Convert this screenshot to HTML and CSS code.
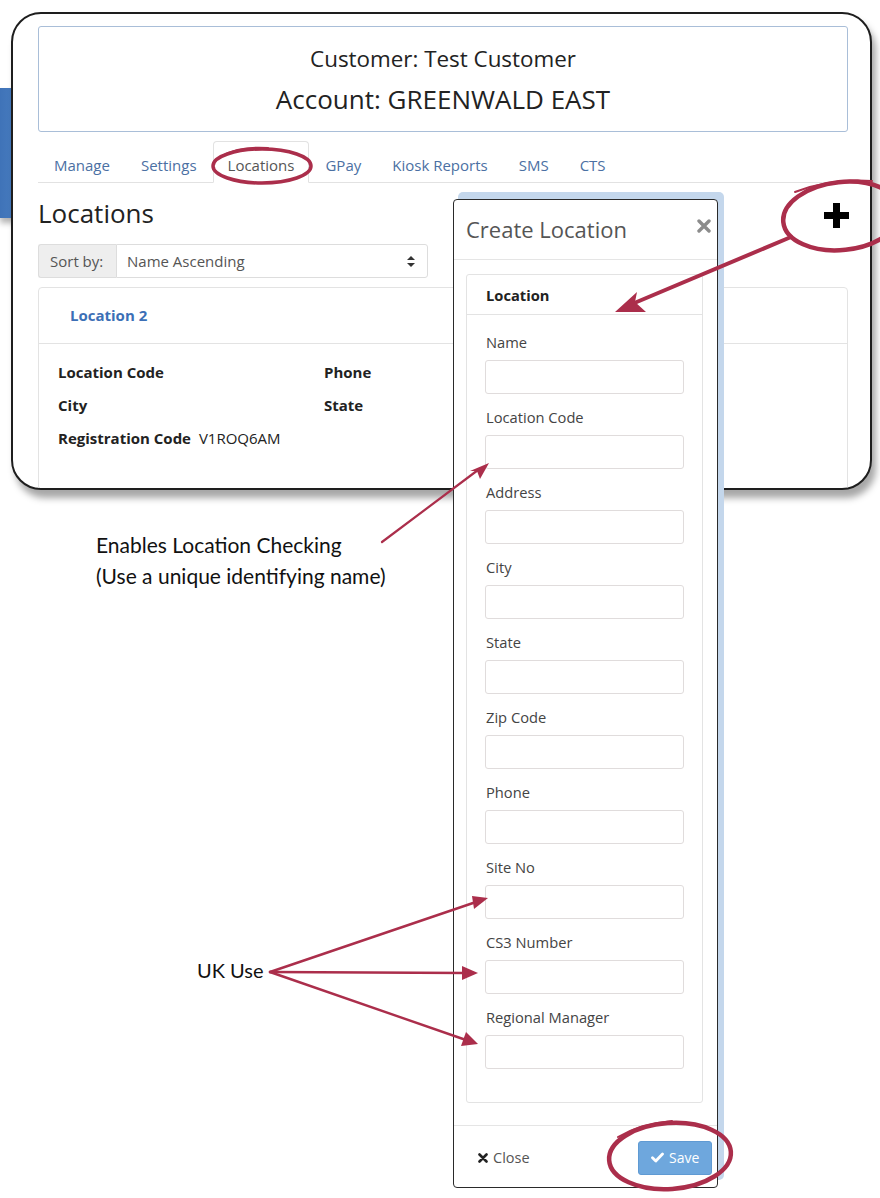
FILE: index.html
```html
<!DOCTYPE html>
<html lang="en">
  <head>
    <meta charset="UTF-8" />
    <title>Create Location</title>
    <link rel="stylesheet" href="styles.css">
  </head>
  <body>
    <div class="page">
      <div class="side-tab"></div>

      <div class="card">
        <div class="account-box">
          <div class="customer">Customer: Test Customer</div>
          <div class="account">Account: GREENWALD EAST</div>
        </div>

        <ul class="tabs">
          <li><a href="#">Manage</a></li>
          <li><a href="#">Settings</a></li>
          <li class="active"><a href="#">Locations</a></li>
          <li><a href="#">GPay</a></li>
          <li><a href="#">Kiosk Reports</a></li>
          <li><a href="#">SMS</a></li>
          <li><a href="#">CTS</a></li>
        </ul>

        <h2 class="page-title">Locations</h2>

        <div class="sort-group">
          <span class="sort-label">Sort by:</span>
          <div class="sort-select">
            <span>Name Ascending</span>
            <svg width="8" height="11" viewBox="0 0 8 11"><path d="M4 0 L8 4 L0 4 Z M4 11 L8 7 L0 7 Z" fill="#333"/></svg>
          </div>
        </div>

        <div class="loc-panel">
          <div class="loc-head">Location 2</div>
          <div class="loc-body">
            <div class="loc-cell"><b>Location Code</b></div>
            <div class="loc-cell"><b>Phone</b></div>
            <div class="loc-cell"><b>City</b></div>
            <div class="loc-cell"><b>State</b></div>
            <div class="loc-cell wide"><b>Registration Code</b> V1ROQ6AM</div>
          </div>
        </div>
      </div>

      <div class="modal-glow"></div>
      <div class="modal">
        <div class="modal-header">
          <span class="modal-title">Create Location</span>
          <svg class="modal-x" width="14" height="14" viewBox="0 0 14 14"><path d="M2 2 L12 12 M12 2 L2 12" stroke="#8c8c8c" stroke-width="3.4" stroke-linecap="round"/></svg>
        </div>
        <div class="modal-body">
          <div class="form-panel">
            <div class="form-head">Location</div>
            <div class="form-body">
              <div class="field"><label>Name</label><input type="text" /></div>
              <div class="field"><label>Location Code</label><input type="text" /></div>
              <div class="field"><label>Address</label><input type="text" /></div>
              <div class="field"><label>City</label><input type="text" /></div>
              <div class="field"><label>State</label><input type="text" /></div>
              <div class="field"><label>Zip Code</label><input type="text" /></div>
              <div class="field"><label>Phone</label><input type="text" /></div>
              <div class="field"><label>Site No</label><input type="text" /></div>
              <div class="field"><label>CS3 Number</label><input type="text" /></div>
              <div class="field"><label>Regional Manager</label><input type="text" /></div>
            </div>
          </div>
        </div>
        <div class="modal-footer">
          <a href="#" class="close-link">
            <svg width="10" height="10" viewBox="0 0 10 10"><path d="M1.5 1.5 L8.5 8.5 M8.5 1.5 L1.5 8.5" stroke="#222" stroke-width="2.6" stroke-linecap="round"/></svg>
            Close
          </a>
          <button type="button" class="save-btn">
            <svg width="13" height="11" viewBox="0 0 13 11"><path d="M1.5 5.8 L4.8 9 L11.5 2" fill="none" stroke="#fff" stroke-width="2.8" stroke-linecap="round" stroke-linejoin="round"/></svg>
            Save
          </button>
        </div>
      </div>

      <svg class="marks" width="880" height="1198" viewBox="0 0 880 1198">
        <!-- plus button -->
        <path d="M833 203 H840 V212 H849 V219 H840 V228 H833 V219 H824 V212 H833 Z" fill="#000"/>

        <g fill="none" stroke="#ab2e4b" stroke-linecap="round">
          <!-- rings -->
          <ellipse cx="262" cy="166" rx="49" ry="17" stroke-width="3.5"/>
          <path d="M222 156 Q240 146 268 148" stroke-width="2"/>
          <ellipse cx="842" cy="216" rx="59" ry="34" transform="rotate(-6 842 216)" stroke-width="4.5"/>
          <path d="M795 192 Q830 178 872 181" stroke-width="2"/>
          <ellipse cx="670" cy="1156" rx="61" ry="33" transform="rotate(-4 670 1156)" stroke-width="4.5"/>
          <path d="M618 1137 Q640 1124 672 1121" stroke-width="2"/>

          <!-- arrows -->
          <line x1="791" y1="237" x2="632" y2="304" stroke-width="4"/>
          <line x1="382" y1="542" x2="478" y2="470" stroke-width="2.2"/>
          <line x1="270" y1="972" x2="476" y2="902" stroke-width="2.4"/>
          <line x1="270" y1="972" x2="466" y2="973" stroke-width="2.4"/>
          <line x1="270" y1="972" x2="466" y2="1040" stroke-width="2.4"/>
        </g>
        <g fill="#ab2e4b">
          <polygon points="615,312 637,292 635,302 646,312"/>
          <polygon points="489,463 480,479 477,471 470,471"/>
          <polygon points="488,898 474,909 472,896"/>
          <polygon points="478,973 462,980 462,966"/>
          <polygon points="478,1044 461,1046 466,1032"/>
        </g>
      </svg>

      <div class="note note-code">Enables Location Checking<br>(Use a unique identifying name)</div>
      <div class="note note-uk">UK Use</div>
    </div>
  </body>
</html>
```

FILE: styles.css
```css
body {
  margin: 0;
  background-color: white;
  font-family: "Open Sans", "Noto Sans", sans-serif;
  color: #333;
}

.page {
  position: relative;
  width: 880px;
  height: 1198px;
  overflow: hidden;
}

.side-tab {
  position: absolute;
  left: 0;
  top: 88px;
  width: 30px;
  height: 130px;
  background: linear-gradient(to right, #3f73b8, #4f84c6);
  box-shadow: 0 5px 6px rgba(0, 0, 0, 0.3);
}

.card {
  position: relative;
  margin: 12px 0 0 11px;
  width: 861px;
  height: 478px;
  box-sizing: border-box;
  padding: 12px 22px 0 25px;
  border: 2px solid #1e1e1e;
  border-radius: 30px;
  background-color: white;
  box-shadow: 4px 8px 7px rgba(0, 0, 0, 0.35);
  overflow: hidden;
}

.account-box {
  height: 106px;
  box-sizing: border-box;
  padding-top: 17px;
  border: 1px solid #a9bed8;
  border-radius: 3px;
  text-align: center;
  color: #222;
}

.customer {
  font-size: 22.4px;
  line-height: 30px;
}

.account {
  margin-top: 7px;
  font-size: 26px;
  line-height: 36px;
}

.tabs {
  display: flex;
  margin: 9px 0 0 0;
  padding: 0;
  list-style: none;
  border-bottom: 1px solid #e2e2e2;
}

.tabs li {
  margin-right: 1px;
  margin-bottom: -1px;
}

.tabs a {
  display: block;
  padding: 13px 14px 7px 15px;
  line-height: 20px;
  font-size: 15px;
  color: #4b70a3;
  text-decoration: none;
  border: 1px solid transparent;
  border-radius: 4px 4px 0 0;
}

.tabs li + li a {
  padding-left: 14px;
}

.tabs .active a {
  color: #555;
  border-color: #e2e2e2 #e2e2e2 white;
  background-color: white;
}

.page-title {
  margin: 15px 0 0 0;
  font-size: 26px;
  line-height: 30px;
  font-weight: normal;
  color: #222;
}

.sort-group {
  display: flex;
  width: 390px;
  height: 34px;
  margin-top: 16px;
  font-size: 15px;
  color: #555;
}

.sort-label {
  display: flex;
  align-items: center;
  padding: 0 11px;
  width: 78px;
  box-sizing: border-box;
  background-color: #eee;
  border: 1px solid #ddd;
  border-right: none;
  border-radius: 3px 0 0 3px;
}

.sort-select {
  flex-grow: 1;
  display: flex;
  align-items: center;
  justify-content: space-between;
  padding: 0 12px 0 10px;
  border: 1px solid #ddd;
  border-radius: 0 3px 3px 0;
}

.loc-panel {
  margin-top: 9px;
  border: 1px solid #e3e3e3;
  border-radius: 4px;
  height: 220px;
}

.loc-head {
  padding: 17px 31px 18px 31px;
  line-height: 20px;
  font-size: 15px;
  font-weight: bold;
  color: #3c6fb6;
  border-bottom: 1px solid #e3e3e3;
}

.loc-body {
  display: grid;
  grid-template-columns: 266px 1fr;
  row-gap: 13px;
  padding: 18px 19px;
  font-size: 15px;
  line-height: 20px;
  color: #222;
}

.loc-cell b {
  margin-right: 4px;
}

.loc-cell.wide {
  grid-column: 1 / 3;
}

.modal-glow {
  position: absolute;
  left: 458px;
  top: 192px;
  width: 266px;
  height: 988px;
  background-color: #c4d7ec;
  border-radius: 5px;
}

.modal {
  position: absolute;
  left: 453px;
  top: 199px;
  width: 265px;
  height: 989px;
  box-sizing: border-box;
  display: flex;
  flex-direction: column;
  background-color: white;
  border: 1px solid #2a2a2a;
  border-radius: 4px;
}

.modal-header {
  display: flex;
  align-items: center;
  justify-content: space-between;
  height: 60px;
  padding: 0 6px 2px 12px;
  box-sizing: border-box;
  border-bottom: 1px solid #e5e5e5;
}

.modal-title {
  font-size: 22px;
  color: #555;
}

.modal-x {
  margin-top: -6px;
}

.modal-body {
  padding: 14px 14px 22px 12px;
}

.form-panel {
  border: 1px solid #e3e3e3;
  border-radius: 3px;
}

.form-head {
  height: 40px;
  box-sizing: border-box;
  padding: 10px 19px;
  font-size: 14.7px;
  font-weight: bold;
  color: #222;
  border-bottom: 1px solid #e3e3e3;
}

.form-body {
  padding: 17px 18px 20px 19px;
}

.field {
  margin-bottom: 13px;
}

.field label {
  display: block;
  margin-bottom: 8px;
  font-size: 14.7px;
  line-height: 20px;
  color: #444;
}

.field input {
  display: block;
  width: calc(100% + 1px);
  height: 34px;
  box-sizing: border-box;
  margin-left: -1px;
  border: 1px solid #e0dcdc;
  border-radius: 3px;
}

.modal-footer {
  flex-grow: 1;
  display: flex;
  align-items: center;
  justify-content: space-between;
  padding: 2px 5px 0 24px;
  border-top: 1px solid #e5e5e5;
}

.close-link {
  display: flex;
  align-items: center;
  gap: 5px;
  font-size: 14.5px;
  color: #555;
  text-decoration: none;
}

.save-btn {
  display: flex;
  align-items: center;
  gap: 5px;
  height: 34px;
  width: 74px;
  padding: 0 0 0 12px;
  font-family: inherit;
  font-size: 14px;
  color: white;
  background-color: #6ea7dd;
  border: 1px solid #5f9ad3;
  border-radius: 3px;
}

.marks {
  position: absolute;
  left: 0;
  top: 0;
}

.note {
  position: absolute;
  font-family: Lato, "Noto Sans", sans-serif;
  font-size: 21px;
  color: #111;
}

.note-code {
  left: 96px;
  top: 529px;
  line-height: 31px;
}

.note-uk {
  left: 197px;
  top: 958px;
  font-size: 20px;
}
```
